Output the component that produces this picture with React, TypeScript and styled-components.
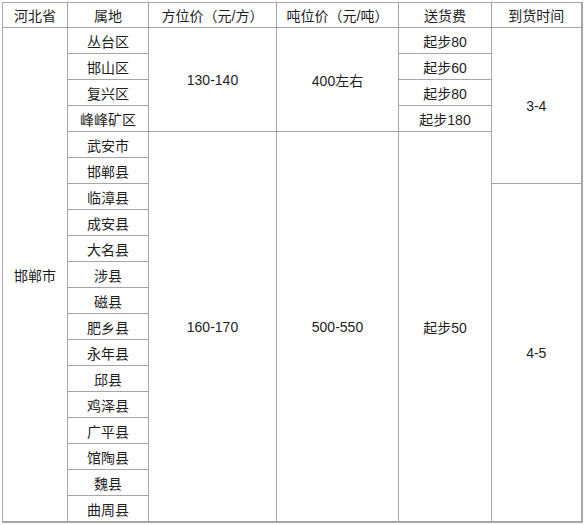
import React from 'react';
import styled, { createGlobalStyle } from 'styled-components';

const GlobalStyle = createGlobalStyle`
  html, body {
    margin: 0;
    padding: 0;
    background: #fff;
  }
`;

const Wrapper = styled.div`
  padding: 2px 0 0 2px;
`;

const PriceTable = styled.table`
  width: 579px;
  border-collapse: collapse;
  table-layout: fixed;
  font-family: "Liberation Sans", "Noto Sans CJK SC", sans-serif;
  font-size: 14px;
  color: #1e1e1e;
  border-right: 2px solid #a6a6a6;
  border-bottom: 2px solid #a6a6a6;
`;

const TH = styled.th`
  height: 24px;
  padding: 0;
  border: 1px solid #a6a6a6;
  font-weight: normal;
  text-align: center;
  vertical-align: middle;
  white-space: nowrap;
`;

const TD = styled.td`
  height: 25px;
  padding: 0;
  border: 1px solid #a6a6a6;
  text-align: center;
  vertical-align: middle;
  white-space: nowrap;
`;

const fees = ['起步80', '起步60', '起步80', '起步180'];
const districts = ['丛台区', '邯山区', '复兴区', '峰峰矿区'];
const counties = [
  '武安市', '邯郸县', '临漳县', '成安县', '大名县', '涉县', '磁县', '肥乡县',
  '永年县', '邱县', '鸡泽县', '广平县', '馆陶县', '魏县', '曲周县',
];

const columns = [65, 81, 128, 122, 93, 90];

export default function App() {
  return (
    <Wrapper>
      <GlobalStyle />
      <PriceTable>
        <colgroup>
          {columns.map((w, i) => <col key={i} style={{ width: w }} />)}
        </colgroup>
        <thead>
          <tr>
            <TH>河北省</TH>
            <TH>属地</TH>
            <TH>方位价（元/方）</TH>
            <TH>吨位价（元/吨）</TH>
            <TH>送货费</TH>
            <TH>到货时间</TH>
          </tr>
        </thead>
        <tbody>
          {districts.map((name, i) => (
            <tr key={name}>
              {i === 0 && <TD rowSpan={19}>邯郸市</TD>}
              <TD>{name}</TD>
              {i === 0 && <TD rowSpan={4}>130-140</TD>}
              {i === 0 && <TD rowSpan={4}>400左右</TD>}
              <TD>{fees[i]}</TD>
              {i === 0 && <TD rowSpan={6}>3-4</TD>}
            </tr>
          ))}
          {counties.map((name, i) => (
            <tr key={name}>
              <TD>{name}</TD>
              {i === 0 && <TD rowSpan={15}>160-170</TD>}
              {i === 0 && <TD rowSpan={15}>500-550</TD>}
              {i === 0 && <TD rowSpan={15}>起步50</TD>}
              {i === 2 && <TD rowSpan={13}>4-5</TD>}
            </tr>
          ))}
        </tbody>
      </PriceTable>
    </Wrapper>
  );
}
